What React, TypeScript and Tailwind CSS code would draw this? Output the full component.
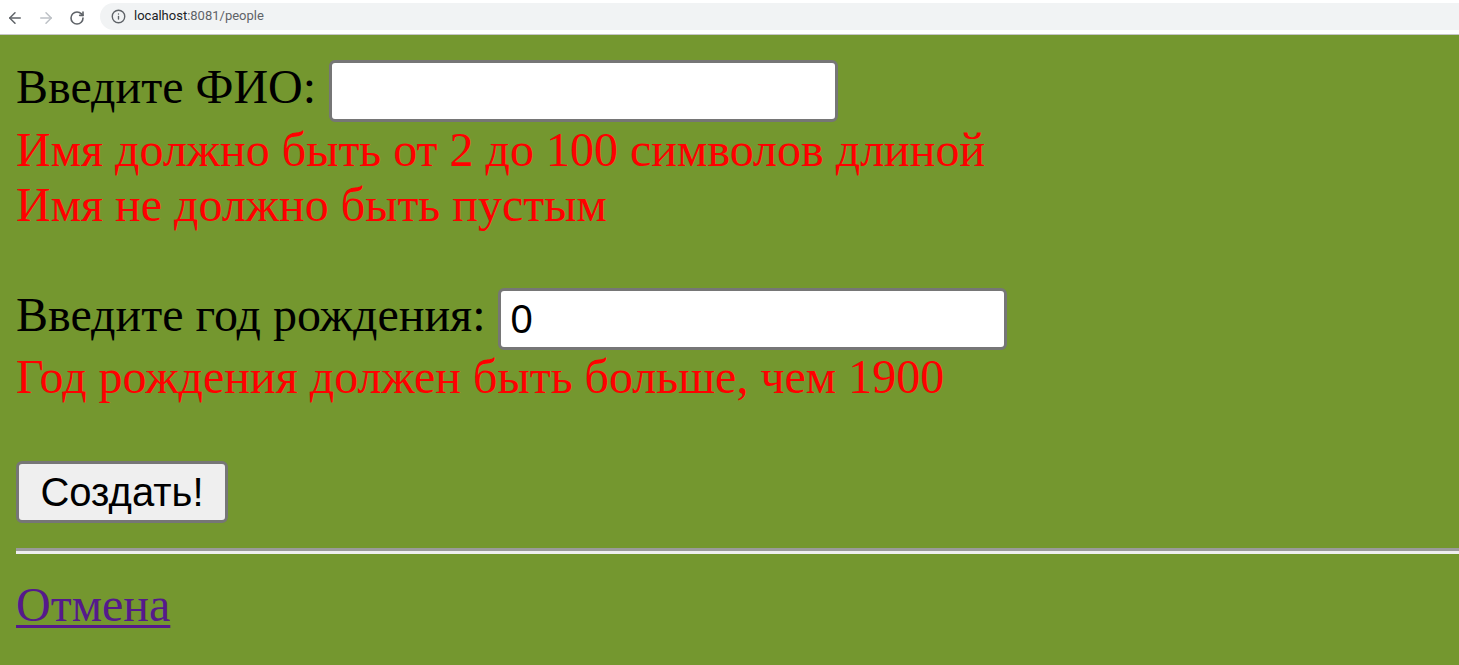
import { ArrowLeft, ArrowRight, RotateCw, Info } from 'lucide-react'

function BrowserBar() {
  return (
    <div className="flex h-[35px] items-center border-b border-[#c6c6c6] bg-white pt-[1px]">
      <div className="flex w-[100px] items-center pl-[6px]">
        <ArrowLeft className="h-[18px] w-[18px] text-[#5f6368]" strokeWidth={2} />
        <ArrowRight className="ml-[13px] h-[18px] w-[18px] text-[#bdc1c6]" strokeWidth={2} />
        <RotateCw className="ml-[14px] h-[16px] w-[16px] text-[#5f6368]" strokeWidth={2.4} />
      </div>
      <div className="mb-[3px] flex h-[27px] flex-1 items-center rounded-l-full bg-[#f1f3f4] pl-[11px]">
        <Info className="h-[15px] w-[15px] text-[#5f6368]" strokeWidth={2.2} />
        <span className="ml-[8px] font-['Roboto',sans-serif] text-[13px] text-[#202124]">
          localhost<span className="text-[#5f6368]">:8081/people</span>
        </span>
      </div>
    </div>
  )
}

export default function App() {
  return (
    <div className="flex h-[665px] flex-col overflow-hidden">
      <BrowserBar />
      <main className="flex-1 bg-[#74972f] pl-4 pt-[25px] font-['Liberation_Serif',serif] text-[48px] leading-[55px] text-black">
        <div className="flex items-start gap-[13px]">
          <label className="mt-[1px] leading-[51px]">Введите ФИО:</label>
          <input
            type="text"
            className="h-[62px] w-[509px] rounded-[6px] border-[3px] border-[#767676] bg-white px-[10px] font-['Liberation_Sans',sans-serif] text-[40px] outline-none"
          />
        </div>
        <div className="text-[#ff0000]">
          <div>Имя должно быть от 2 до 100 символов длиной</div>
          <div>Имя не должно быть пустым</div>
        </div>

        <div className="mt-[56px] flex items-start gap-[13px]">
          <label className="mt-[1px] leading-[51px]">Введите год рождения:</label>
          <input
            type="text"
            defaultValue="0"
            className="h-[62px] w-[509px] rounded-[6px] border-[3px] border-[#767676] bg-white px-[9px] font-['Liberation_Sans',sans-serif] text-[40px] text-black outline-none"
          />
        </div>
        <div className="-mt-[1px] text-[#ff0000]">Год рождения должен быть больше, чем 1900</div>

        <button className="mt-[57px] flex h-[62px] w-[212px] items-center justify-center rounded-[6px] border-[3px] border-[#767676] bg-[#efefef] font-['Liberation_Sans',sans-serif] text-[40px] leading-none text-black">
          Создать!
        </button>

        <div className="mt-[25px] border-t-[3px] border-b-[3px] border-t-[#9a9a9a] border-b-[#eeeeee]" />

        <a href="#" className="mt-[23px] inline-block text-[#551a8b] underline decoration-[3px] underline-offset-[4px]">
          Отмена
        </a>
      </main>
    </div>
  )
}
